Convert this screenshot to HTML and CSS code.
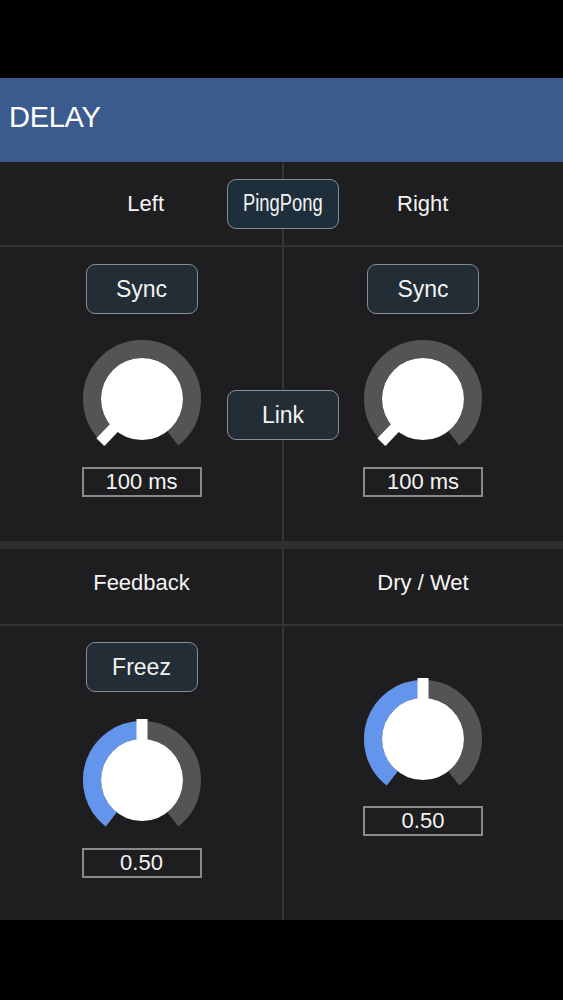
FILE: index.html
```html
<!DOCTYPE html>
<html lang="en">
<head>
<meta charset="utf-8">
<title>Delay</title>
<link rel="stylesheet" href="styles.css">
</head>
<body>
<div class="screen">
  <div class="topbar"></div>
  <header class="header"><h1 class="title">DELAY</h1></header>
  <main class="panel">
    <section class="row row-top">
      <div class="label label-left">Left</div>
      <button class="btn btn-active"><span class="narrow">PingPong</span></button>
      <div class="label label-right">Right</div>
    </section>

    <section class="row row-delay">
      <div class="col col-left">
        <button class="btn">Sync</button>
        <svg class="knob" viewBox="0 0 120 120" width="120" height="120">
          <path class="track" d="M29.22 99.40 A50 50 0 1 1 90.78 99.40"/>
          <circle class="cap" cx="60" cy="60" r="41"/>
          <rect class="pointer" x="54.5" y="0" width="11" height="24" transform="rotate(-136 60 60)"/>
        </svg>
        <div class="value">100 ms</div>
      </div>
      <div class="col-mid">
        <button class="btn btn-link">Link</button>
      </div>
      <div class="col col-right">
        <button class="btn">Sync</button>
        <svg class="knob" viewBox="0 0 120 120" width="120" height="120">
          <path class="track" d="M29.22 99.40 A50 50 0 1 1 90.78 99.40"/>
          <circle class="cap" cx="60" cy="60" r="41"/>
          <rect class="pointer" x="54.5" y="0" width="11" height="24" transform="rotate(-136 60 60)"/>
        </svg>
        <div class="value">100 ms</div>
      </div>
    </section>

    <div class="separator"></div>

    <section class="row row-labels">
      <div class="col col-left"><div class="label">Feedback</div></div>
      <div class="col col-right"><div class="label">Dry / Wet</div></div>
    </section>

    <section class="row row-mix">
      <div class="col col-left">
        <button class="btn">Freez</button>
        <svg class="knob knob-fb" viewBox="0 0 120 120" width="120" height="120">
          <path class="track" d="M29.22 99.40 A50 50 0 1 1 90.78 99.40"/>
          <path class="fill" d="M29.22 99.40 A50 50 0 0 1 60 10"/>
          <circle class="cap" cx="60" cy="60" r="41"/>
          <rect class="pointer" x="54.5" y="-1" width="11" height="25"/>
        </svg>
        <div class="value">0.50</div>
      </div>
      <div class="col col-right col-wet">
        <svg class="knob knob-wet" viewBox="0 0 120 120" width="120" height="120">
          <path class="track" d="M29.22 99.40 A50 50 0 1 1 90.78 99.40"/>
          <path class="fill" d="M29.22 99.40 A50 50 0 0 1 60 10"/>
          <circle class="cap" cx="60" cy="60" r="41"/>
          <rect class="pointer" x="54.5" y="-1" width="11" height="25"/>
        </svg>
        <div class="value value-wet">0.50</div>
      </div>
    </section>
  </main>
  <div class="bottombar"></div>
</div>
</body>
</html>
```

FILE: styles.css
```css
* { box-sizing: border-box; }

html, body {
  margin: 0;
  padding: 0;
  background: #000;
}

body {
  font-family: "Liberation Sans", Arial, Helvetica, sans-serif;
  color: #f2f2f2;
}

.screen {
  width: 563px;
  height: 1000px;
  display: flex;
  flex-direction: column;
  overflow: hidden;
}

.topbar {
  height: 78px;
  background: #000;
}

.header {
  height: 84px;
  background: #3b5a8e;
  display: flex;
  align-items: center;
  padding: 0 0 6px 9px;
}

.title {
  margin: 0;
  font-size: 29px;
  font-weight: normal;
  color: #fff;
  letter-spacing: -0.3px;
}

.panel {
  height: 758px;
  background-color: #1e1d20;
  background-image: linear-gradient(to right,
    transparent 282px, #343336 282px, #343336 284px, transparent 284px);
  display: flex;
  flex-direction: column;
}

.row {
  display: flex;
  width: 100%;
}

.row-top {
  height: 85px;
  border-bottom: 2px solid #323134;
  display: grid;
  grid-template-columns: 227px 112px 1fr;
  align-items: center;
}

.label {
  font-size: 22px;
  color: #f4f4f4;
  line-height: 1;
}

.label-left {
  text-align: right;
  padding-right: 63px;
}

.label-right {
  padding-left: 58px;
}

.btn {
  width: 112px;
  height: 50px;
  border: 1.5px solid #868d93;
  border-radius: 9px;
  background: #232d35;
  color: #f2f2f2;
  font-family: "Liberation Sans", Arial, Helvetica, sans-serif;
  font-size: 23px;
  padding: 0;
  display: flex;
  align-items: center;
  justify-content: center;
}

.btn-active {
  background: #1e2e3b;
}

.narrow {
  display: inline-block;
  font-size: 23px;
  transform: scaleX(0.8);
}

.row-delay {
  height: 294px;
}

.col {
  display: flex;
  flex-direction: column;
  align-items: center;
}

.col-left {
  width: 283px;
}

.col-right {
  flex: 1;
}

.row-delay .col {
  padding-top: 17px;
}

.col-mid {
  width: 0;
  display: flex;
  justify-content: center;
  padding-top: 143px;
}

.btn-link {
  flex-shrink: 0;
}

.knob {
  display: block;
  margin-top: 25px;
  overflow: visible;
}

.track {
  fill: none;
  stroke: #545356;
  stroke-width: 18;
}

.fill {
  fill: none;
  stroke: #6495ed;
  stroke-width: 18;
}

.cap, .pointer {
  fill: #fff;
}

.value {
  width: 120px;
  height: 30px;
  margin-top: 8px;
  border: 2px solid #8a8a8c;
  font-size: 22px;
  line-height: 26px;
  text-align: center;
  color: #f4f4f4;
}

.separator {
  height: 8px;
  background: #2f2e31;
}

.row-labels {
  height: 77px;
  border-bottom: 2px solid #323134;
}

.row-labels .col {
  justify-content: center;
  padding-bottom: 8px;
}

.row-mix {
  height: 294px;
}

.row-mix .col-left {
  padding-top: 16px;
}

.knob-fb {
  margin-top: 28px;
}

.col-wet {
  padding-top: 53px;
}

.knob-wet {
  margin-top: 0;
}

.value-wet {
  margin-top: 7px;
}

.bottombar {
  flex: 1;
  background: #000;
}
```
